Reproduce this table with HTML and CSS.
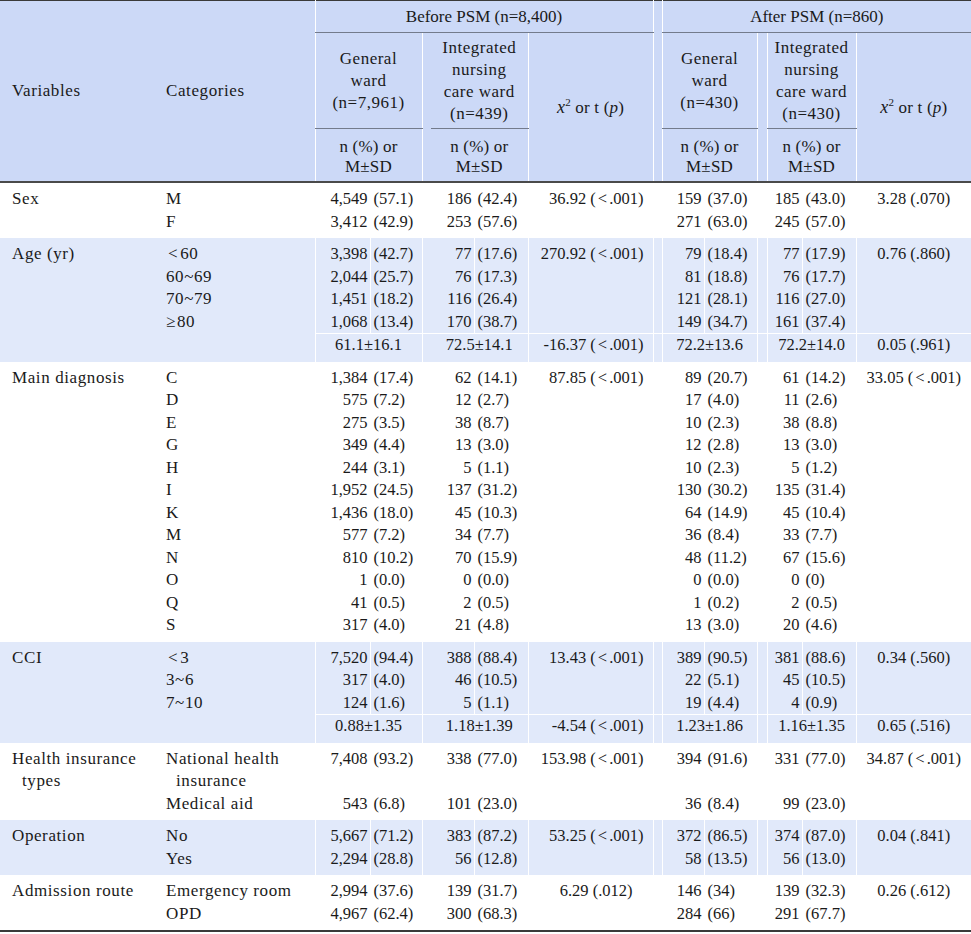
FILE: index.html
```html
<!DOCTYPE html>
<html lang="en">
<head>
<meta charset="utf-8">
<title>Table</title>
<link rel="stylesheet" href="styles.css">
</head>
<body>
<table class="tbl">
  <colgroup>
    <col class="c1"><col class="c2">
    <col class="c3 b"><col class="c4 b"><col class="c5 b"><col class="c6"><col class="c7 b"><col class="c8 b">
    <col class="c9 b">
    <col class="c10 b"><col class="c11 b"><col class="c12 b"><col class="c13 b"><col class="c14 b"><col class="c15 b">
  </colgroup>
  <thead>
    <tr>
      <th class="lab" rowspan="3">Variables</th>
      <th class="lab2" rowspan="3">Categories</th>
      <th class="grp" colspan="6">Before PSM (n=8,400)</th>
      <th class="sp" rowspan="3"></th>
      <th class="grp" colspan="6">After PSM (n=860)</th>
    </tr>
    <tr>
      <th class="sub" colspan="2">General<br>ward<br>(n=7,961)</th>
      <th class="sp" rowspan="2"></th>
      <th class="sub" colspan="2">Integrated<br>nursing<br>care ward<br>(n=439)</th>
      <th class="xh" rowspan="2"><i class="xi">x</i><sup>2</sup> or t (<i>p</i>)</th>
      <th class="sub" colspan="2">General<br>ward<br>(n=430)</th>
      <th class="sp" rowspan="2"></th>
      <th class="sub" colspan="2">Integrated<br>nursing<br>care ward<br>(n=430)</th>
      <th class="xh" rowspan="2"><i class="xi">x</i><sup>2</sup> or t (<i>p</i>)</th>
    </tr>
    <tr>
      <th class="unit" colspan="2">n (%) or<br>M±SD</th>
      <th class="unit" colspan="2">n (%) or<br>M±SD</th>
      <th class="unit" colspan="2">n (%) or<br>M±SD</th>
      <th class="unit" colspan="2">n (%) or<br>M±SD</th>
    </tr>
  </thead>
  <tbody>
    <!-- Sex -->
    <tr>
      <td class="v">Sex</td>
      <td class="c">M<br>F</td>
      <td class="n">4,549<br>3,412</td><td class="p">(57.1)<br>(42.9)</td><td></td>
      <td class="n">186<br>253</td><td class="p">(42.4)<br>(57.6)</td>
      <td class="xb">36.92 (<span class="lt">&lt;</span>.001)</td>
      <td></td>
      <td class="n">159<br>271</td><td class="p">(37.0)<br>(63.0)</td><td></td>
      <td class="n">185<br>245</td><td class="p">(43.0)<br>(57.0)</td>
      <td class="xa">3.28 (.070)</td>
    </tr>
    <!-- Age -->
    <tr class="sh top">
      <td class="v" rowspan="2">Age (yr)</td>
      <td class="c" rowspan="2"><span class="lt2">&lt;</span>60<br>60~69<br>70~79<br><span class="ge">≥</span>80</td>
      <td class="n">3,398<br>2,044<br>1,451<br>1,068</td><td class="p">(42.7)<br>(25.7)<br>(18.2)<br>(13.4)</td><td></td>
      <td class="n">77<br>76<br>116<br>170</td><td class="p">(17.6)<br>(17.3)<br>(26.4)<br>(38.7)</td>
      <td class="xb">270.92 (<span class="lt">&lt;</span>.001)</td>
      <td></td>
      <td class="n">79<br>81<br>121<br>149</td><td class="p">(18.4)<br>(18.8)<br>(28.1)<br>(34.7)</td><td></td>
      <td class="n">77<br>76<br>116<br>161</td><td class="p">(17.9)<br>(17.7)<br>(27.0)<br>(37.4)</td>
      <td class="xa">0.76 (.860)</td>
    </tr>
    <tr class="sh mean">
      <td class="m" colspan="2">61.1±16.1</td><td></td>
      <td class="m" colspan="2">72.5±14.1</td>
      <td class="xb">-16.37 (<span class="lt">&lt;</span>.001)</td>
      <td></td>
      <td class="m" colspan="2">72.2±13.6</td><td></td>
      <td class="m" colspan="2">72.2±14.0</td>
      <td class="xa">0.05 (.961)</td>
    </tr>
    <!-- Main diagnosis -->
    <tr>
      <td class="v">Main diagnosis</td>
      <td class="c">C<br>D<br>E<br>G<br>H<br>I<br>K<br>M<br>N<br>O<br>Q<br>S</td>
      <td class="n">1,384<br>575<br>275<br>349<br>244<br>1,952<br>1,436<br>577<br>810<br>1<br>41<br>317</td>
      <td class="p">(17.4)<br>(7.2)<br>(3.5)<br>(4.4)<br>(3.1)<br>(24.5)<br>(18.0)<br>(7.2)<br>(10.2)<br>(0.0)<br>(0.5)<br>(4.0)</td>
      <td></td>
      <td class="n">62<br>12<br>38<br>13<br>5<br>137<br>45<br>34<br>70<br>0<br>2<br>21</td>
      <td class="p">(14.1)<br>(2.7)<br>(8.7)<br>(3.0)<br>(1.1)<br>(31.2)<br>(10.3)<br>(7.7)<br>(15.9)<br>(0.0)<br>(0.5)<br>(4.8)</td>
      <td class="xb">87.85 (<span class="lt">&lt;</span>.001)</td>
      <td></td>
      <td class="n">89<br>17<br>10<br>12<br>10<br>130<br>64<br>36<br>48<br>0<br>1<br>13</td>
      <td class="p">(20.7)<br>(4.0)<br>(2.3)<br>(2.8)<br>(2.3)<br>(30.2)<br>(14.9)<br>(8.4)<br>(11.2)<br>(0.0)<br>(0.2)<br>(3.0)</td>
      <td></td>
      <td class="n">61<br>11<br>38<br>13<br>5<br>135<br>45<br>33<br>67<br>0<br>2<br>20</td>
      <td class="p">(14.2)<br>(2.6)<br>(8.8)<br>(3.0)<br>(1.2)<br>(31.4)<br>(10.4)<br>(7.7)<br>(15.6)<br>(0)<br>(0.5)<br>(4.6)</td>
      <td class="xa">33.05 (<span class="lt">&lt;</span>.001)</td>
    </tr>
    <!-- CCI -->
    <tr class="sh top">
      <td class="v" rowspan="2">CCI</td>
      <td class="c" rowspan="2"><span class="lt2">&lt;</span>3<br>3~6<br>7~10</td>
      <td class="n">7,520<br>317<br>124</td><td class="p">(94.4)<br>(4.0)<br>(1.6)</td><td></td>
      <td class="n">388<br>46<br>5</td><td class="p">(88.4)<br>(10.5)<br>(1.1)</td>
      <td class="xb">13.43 (<span class="lt">&lt;</span>.001)</td>
      <td></td>
      <td class="n">389<br>22<br>19</td><td class="p">(90.5)<br>(5.1)<br>(4.4)</td><td></td>
      <td class="n">381<br>45<br>4</td><td class="p">(88.6)<br>(10.5)<br>(0.9)</td>
      <td class="xa">0.34 (.560)</td>
    </tr>
    <tr class="sh mean">
      <td class="m" colspan="2">0.88±1.35</td><td></td>
      <td class="m" colspan="2">1.18±1.39</td>
      <td class="xb">-4.54 (<span class="lt">&lt;</span>.001)</td>
      <td></td>
      <td class="m" colspan="2">1.23±1.86</td><td></td>
      <td class="m" colspan="2">1.16±1.35</td>
      <td class="xa">0.65 (.516)</td>
    </tr>
    <!-- Health insurance -->
    <tr>
      <td class="v hangv">Health insurance<br>types</td>
      <td class="c"><div class="hang">National health<br>insurance</div><div>Medical aid</div></td>
      <td class="n">7,408<br><br>543</td><td class="p">(93.2)<br><br>(6.8)</td><td></td>
      <td class="n">338<br><br>101</td><td class="p">(77.0)<br><br>(23.0)</td>
      <td class="xb">153.98 (<span class="lt">&lt;</span>.001)</td>
      <td></td>
      <td class="n">394<br><br>36</td><td class="p">(91.6)<br><br>(8.4)</td><td></td>
      <td class="n">331<br><br>99</td><td class="p">(77.0)<br><br>(23.0)</td>
      <td class="xa">34.87 (<span class="lt">&lt;</span>.001)</td>
    </tr>
    <!-- Operation -->
    <tr class="sh">
      <td class="v">Operation</td>
      <td class="c">No<br>Yes</td>
      <td class="n">5,667<br>2,294</td><td class="p">(71.2)<br>(28.8)</td><td></td>
      <td class="n">383<br>56</td><td class="p">(87.2)<br>(12.8)</td>
      <td class="xb">53.25 (<span class="lt">&lt;</span>.001)</td>
      <td></td>
      <td class="n">372<br>58</td><td class="p">(86.5)<br>(13.5)</td><td></td>
      <td class="n">374<br>56</td><td class="p">(87.0)<br>(13.0)</td>
      <td class="xa">0.04 (.841)</td>
    </tr>
    <!-- Admission route -->
    <tr>
      <td class="v">Admission route</td>
      <td class="c">Emergency room<br>OPD</td>
      <td class="n">2,994<br>4,967</td><td class="p">(37.6)<br>(62.4)</td><td></td>
      <td class="n">139<br>300</td><td class="p">(31.7)<br>(68.3)</td>
      <td class="xb pr">6.29 (.012)</td>
      <td></td>
      <td class="n">146<br>284</td><td class="p">(34)<br>(66)</td><td></td>
      <td class="n">139<br>291</td><td class="p">(32.3)<br>(67.7)</td>
      <td class="xa">0.26 (.612)</td>
    </tr>
  </tbody>
</table>
</body>
</html>
```

FILE: styles.css
```css
html, body {
  margin: 0;
  padding: 0;
  background: #ffffff;
}

body {
  font-family: "Liberation Serif", "Times New Roman", serif;
  color: #1a1a1a;
}

.tbl {
  width: 971px;
  border-collapse: collapse;
  table-layout: fixed;
  border-top: 1px solid #3a3a3a;
  border-bottom: 2px solid #3a3a3a;
  font-size: 17px;
}

.c1 { width: 156px; }
.c2 { width: 159px; }
.c3 { width: 55px; }
.c4 { width: 52px; }
.c5 { width: 9px; }
.c6 { width: 43px; }
.c7 { width: 54px; }
.c8 { width: 125px; }
.c9 { width: 9px; }
.c10 { width: 42px; }
.c11 { width: 53px; }
.c12 { width: 10px; }
.c13 { width: 35px; }
.c14 { width: 54px; }
.c15 { width: 115px; }

col.b { border-left: 1px solid #ffffff; }

/* header */
thead th {
  background: #ccd9f7;
  font-weight: normal;
  line-height: 22px;
  vertical-align: middle;
  text-align: center;
  padding: 0;
  letter-spacing: 0.3px;
}

thead th.lab {
  text-align: left;
  padding-left: 12px;
  letter-spacing: 0.6px;
}

thead th.lab2 {
  text-align: left;
  padding-left: 10px;
  letter-spacing: 0.6px;
}

thead th.grp {
  padding: 5px 0 4px;
  letter-spacing: 0;
  border-bottom: 1px solid #737b8c;
}

thead th.sub {
  padding: 4px 0 3px;
  border-bottom: 1px solid #737b8c;
  letter-spacing: 0.5px;
}

thead th.unit {
  padding: 8px 0 4px;
  line-height: 20px;
  letter-spacing: 0.2px;
}

thead th.xh {
  letter-spacing: 0.2px;
}

.xi {
  font-size: 18px;
}

sup {
  font-size: 11px;
  line-height: 0;
  vertical-align: 7px;
}

tbody {
  border-top: 2px solid #4a4a4a;
}

/* body */
tbody td {
  vertical-align: top;
  padding: 5px 0;
  line-height: 22.5px;
  font-size: 16.5px;
  white-space: nowrap;
}

tbody tr.sh td {
  background: #e1e9fa;
}

tbody tr.top td {
  padding-bottom: 0;
}

tbody tr.mean td {
  padding-top: 0;
  border-top: 1px solid #ffffff;
}

td.v {
  padding-left: 12px;
  font-size: 17px;
  letter-spacing: 0.6px;
}

td.hangv {
  padding-left: 22px;
  text-indent: -10px;
}

td.c {
  padding-left: 10px;
  font-size: 17px;
  letter-spacing: 0.6px;
}

.hang {
  padding-left: 10px;
  text-indent: -10px;
}

td.n {
  text-align: right;
  padding-right: 2px;
}

td.p {
  text-align: left;
  padding-left: 3px;
}

td.m {
  text-align: center;
}

td.xb {
  text-align: right;
  padding-right: 9px;
}

td.xb.pr {
  padding-right: 20px;
}

td.xa {
  text-align: center;
}

.lt {
  margin: 0 2px;
}

.lt2 {
  margin: 0 2px 0 2px;
}

.ge {
  margin-right: 1px;
}
```
